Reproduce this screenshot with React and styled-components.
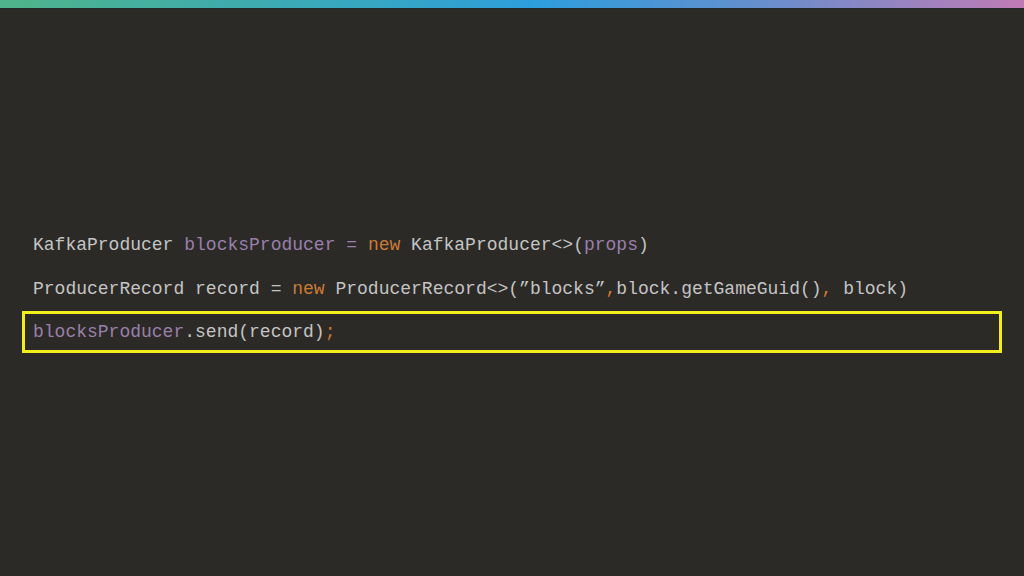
import React from "react";
import styled, { createGlobalStyle } from "styled-components";

const GlobalStyle = createGlobalStyle`
  html, body {
    margin: 0;
    padding: 0;
    background: #2b2a27;
  }
`;

const Slide = styled.div`
  width: 1024px;
  height: 576px;
  background: #2b2a27;
  display: flex;
  flex-direction: column;
  overflow: hidden;
`;

const TopBar = styled.div`
  height: 8px;
  flex-shrink: 0;
  background: linear-gradient(90deg, #4fb48a 0%, #3aa9b8 30%, #2d9edd 52%, #5f90cf 72%, #c07bb5 100%);
  border-bottom: 1px solid #1f2b2a;
`;

const Code = styled.div`
  display: flex;
  flex-direction: column;
  padding: 214px 22px 0 22px;
  font-family: "Liberation Mono", "Courier New", monospace;
  font-size: 18px;
  color: #c4c4c4;
`;

const Line = styled.div`
  box-sizing: border-box;
  height: ${(p) => (p.$highlight ? "42px" : "44px")};
  line-height: ${(p) => (p.$highlight ? "36px" : "44px")};
  white-space: pre;
  border: ${(p) => (p.$highlight ? "3px solid #f2ee1c" : "none")};
  width: ${(p) => (p.$highlight ? "980px" : "auto")};
  padding-left: ${(p) => (p.$highlight ? "8px" : "11px")};
`;

const Var = styled.span`
  color: #9a7fab;
`;

const Kw = styled.span`
  color: #cc7a32;
`;

export default function App() {
  return (
    <Slide>
      <GlobalStyle />
      <TopBar />
      <Code>
        <Line>
          KafkaProducer <Var>blocksProducer</Var> <Var>=</Var> <Kw>new</Kw> KafkaProducer&lt;&gt;(<Var>props</Var>)
        </Line>
        <Line>
          ProducerRecord record = <Kw>new</Kw> ProducerRecord&lt;&gt;(”blocks”<Kw>,</Kw>block.getGameGuid()<Kw>,</Kw> block)
        </Line>
        <Line $highlight>
          <Var>blocksProducer</Var>.send(record)<Kw>;</Kw>
        </Line>
      </Code>
    </Slide>
  );
}
